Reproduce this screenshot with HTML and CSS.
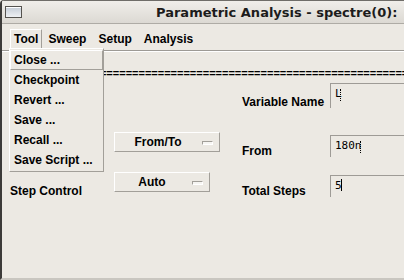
FILE: index.html
```html
<!DOCTYPE html>
<html lang="en">

<head>
    <meta charset="UTF-8">
    <title>Parametric Analysis</title>
    <link rel="stylesheet" href="styles.css">
</head>

<body>

    <div class="window">
        <!-- Title bar -->
        <div class="titlebar">
            <span class="win-icon"></span>
            <span class="title">Parametric Analysis - spectre(0): </span>
        </div>

        <!-- Menu bar -->
        <div class="menubar">
            <span class="menu-item active">Tool</span>
            <span class="menu-item">Sweep</span>
            <span class="menu-item">Setup</span>
            <span class="menu-item">Analysis</span>
        </div>

        <!-- Form -->
        <div class="content">
            <div class="separator">==================================================================</div>

            <div class="form">
                <div class="row first">
                    <span></span>
                    <span></span>
                    <span class="label">Variable Name</span>
                    <span class="field">L<span class="cursor dotted"></span></span>
                </div>
                <div class="row">
                    <span></span>
                    <span class="option wide">From/To <i class="mark"></i></span>
                    <span class="label">From</span>
                    <span class="field">180n<span class="cursor dotted"></span></span>
                </div>
                <div class="row">
                    <span class="label">Step Control</span>
                    <span class="option">Auto <i class="mark"></i></span>
                    <span class="label">Total Steps</span>
                    <span class="field">5<span class="cursor ibeam"></span></span>
                </div>
            </div>
        </div>

        <!-- Tool menu (open) -->
        <div class="dropdown">
            <div class="drop-item selected">Close ...</div>
            <div class="drop-item">Checkpoint</div>
            <div class="drop-item">Revert ...</div>
            <div class="drop-item">Save ...</div>
            <div class="drop-item">Recall ...</div>
            <div class="drop-item">Save Script ...</div>
        </div>
    </div>

</body>

</html>
```

FILE: styles.css
```css
body {
    margin: 0;
    padding: 0;
    background-color: #ece9e3;
    font-family: "Liberation Sans", Arial, sans-serif;
    font-size: 12px;
    font-weight: bold;
    color: #000;
    overflow: hidden;
}

.window {
    position: relative;
    width: 404px;
    height: 280px;
    box-sizing: border-box;
    border-left: 2px solid #3c3b39;
    border-bottom: 2px solid #c9c6c0;
    border-top-left-radius: 4px;
    overflow: hidden;
    background-color: #ece9e3;
}

.titlebar {
    height: 22px;
    display: flex;
    align-items: center;
    background: linear-gradient(#f0eeea, #dcd9d3);
    border-top: 1px solid #6f6d69;
    border-bottom: 1px solid #aeaba5;
    white-space: nowrap;
}

.win-icon {
    width: 15px;
    height: 10px;
    margin-left: 3px;
    border: 1px solid #55534f;
    background: linear-gradient(#c4ccd6, #eef0f3);
    box-shadow: inset 0 1px 0 #fff;
}

.title {
    margin-left: 134px;
    font-family: "DejaVu Sans", sans-serif;
    font-size: 13px;
    font-weight: bold;
    color: #1c1c1c;
}

.menubar {
    height: 26px;
    display: flex;
    align-items: center;
    padding-left: 8px;
    border-bottom: 1px solid #9d9a95;
    box-shadow: 0 1px 0 #fff;
}

.menu-item {
    padding: 2px 3px 3px 3px;
    margin-right: 4px;
    border: 1px solid transparent;
    margin-top: 4px;
}

.menu-item.active {
    margin-right: 2px;
    border-color: #fff #a29f99 #a29f99 #fff;
}

.content {
    padding-left: 8px;
}

.separator {
    margin-top: 16px;
    height: 12px;
    line-height: 12px;
    font-size: 11px;
    white-space: nowrap;
}

.form {
    display: flex;
    flex-direction: column;
    gap: 13px;
}

.row {
    display: grid;
    grid-template-columns: 104px 128px 88px 100px;
    height: 27px;
    align-items: start;
}

.row.first {
    margin-top: 1px;
    margin-bottom: 12px;
}

.label {
    margin-top: 12px;
    white-space: nowrap;
}

.row.first .label {
    margin-top: 15px;
}

.option {
    position: relative;
    display: flex;
    align-items: center;
    justify-content: center;
    width: 96px;
    height: 20px;
    box-sizing: border-box;
    border: 1px solid;
    border-color: #fff #a29f99 #a29f99 #fff;
    padding-right: 20px;
}

.option.wide {
    width: 106px;
    padding-right: 18px;
}

.mark {
    position: absolute;
    right: 6px;
    top: 8px;
    width: 9px;
    height: 2px;
    border: 1px solid;
    border-color: #a29f99 #fff #fff #a29f99;
    background: #f6f5f2;
}

.field {
    margin-top: 3px;
    height: 22px;
    box-sizing: border-box;
    border-top: 1px solid #9e9b96;
    border-left: 1px solid #9e9b96;
    padding: 3px 0 0 4px;
    font-family: "DejaVu Sans Mono", monospace;
    font-weight: normal;
    font-size: 11px;
}

.row.first .field {
    height: 25px;
}

.cursor {
    display: inline-block;
    vertical-align: top;
    width: 3px;
    height: 12px;
    margin-left: -2px;
}

.cursor.dotted {
    border-left: 1px dotted #000;
    margin-top: 2px;
}

.cursor.ibeam {
    border-left: 1px solid #000;
    margin-left: -1px;
}

.dropdown {
    position: absolute;
    left: 7px;
    top: 48px;
    width: 93px;
    padding: 1px 0;
    border: 1px solid;
    border-color: #fff #a29f99 #a29f99 #fff;
    background-color: #ece9e3;
}

.drop-item {
    height: 20px;
    line-height: 18px;
    padding-left: 3px;
    border: 1px solid transparent;
    box-sizing: border-box;
    white-space: nowrap;
}

.drop-item.selected {
    border-color: #fff #a29f99 #a29f99 #fff;
}
```
